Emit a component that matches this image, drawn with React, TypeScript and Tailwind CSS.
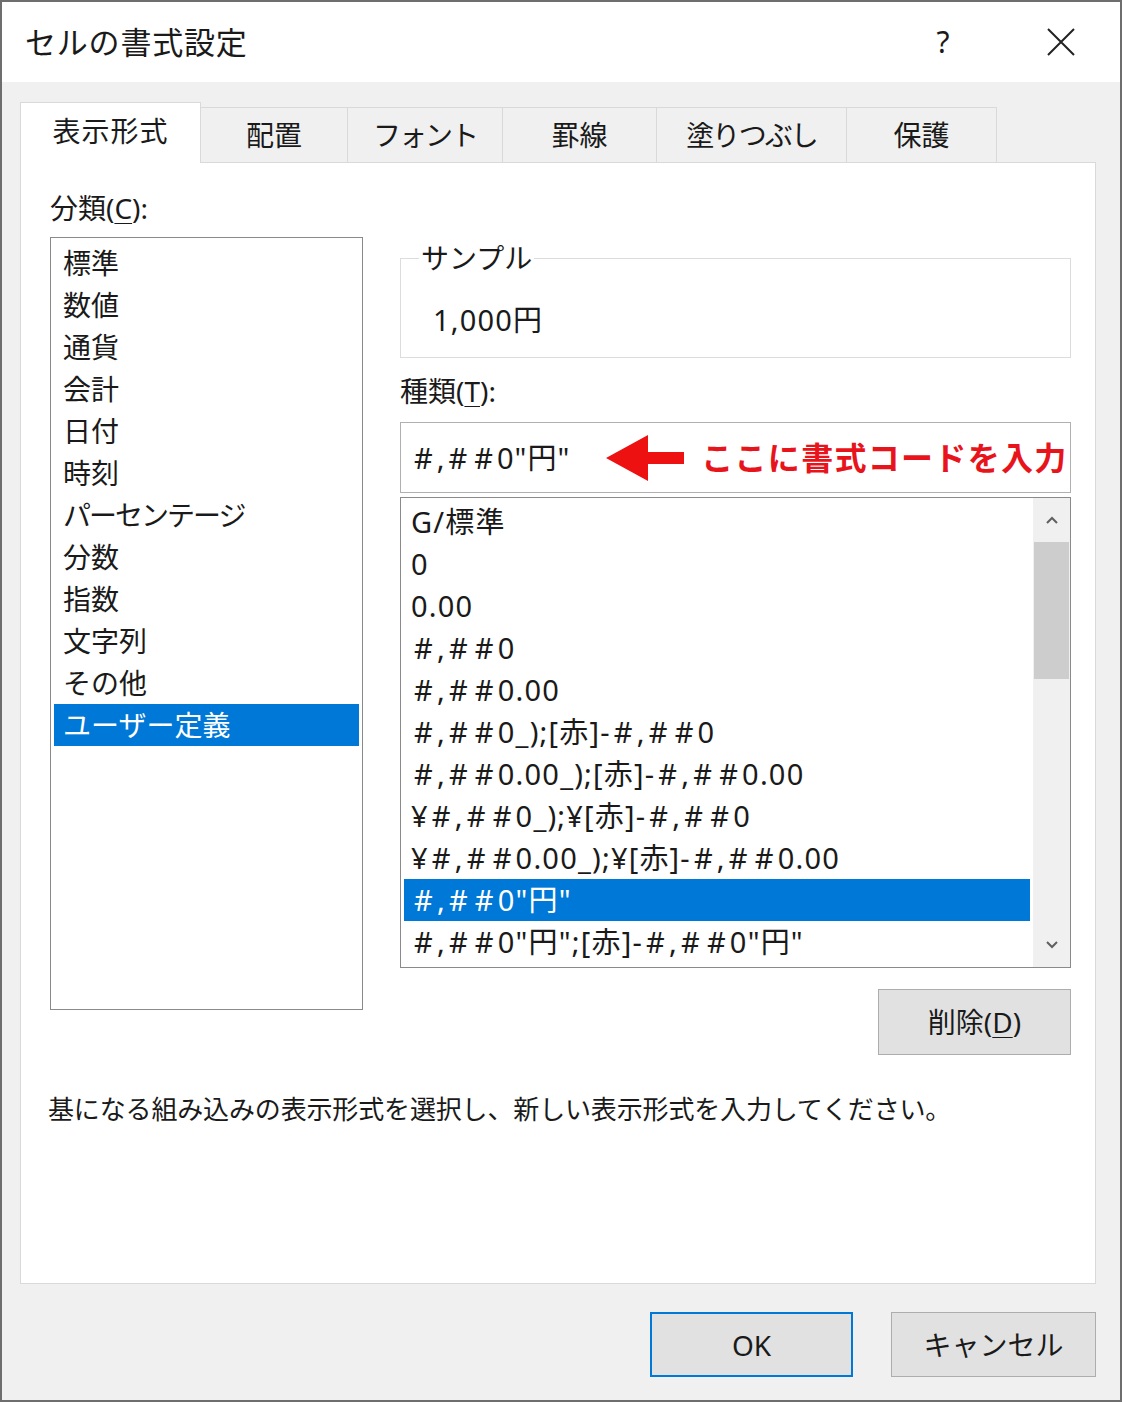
import { clsx } from 'clsx';

const FONT = "font-['Noto_Sans','Noto_Sans_CJK_JP',sans-serif]";

const TABS = [
    { label: '表示形式', w: 'w-[181px]', active: true },
    { label: '配置', w: 'w-[147px]' },
    { label: 'フォント', w: 'w-[155px]', kana: true },
    { label: '罫線', w: 'w-[154px]' },
    { label: '塗りつぶし', w: 'w-[190px]', kana: true },
    { label: '保護', w: 'w-[150px]' },
];

const CATEGORIES = ['標準', '数値', '通貨', '会計', '日付', '時刻', 'パーセンテージ', '分数', '指数', '文字列', 'その他', 'ユーザー定義'];

const FORMATS = [
    'G/標準',
    '0',
    '0.00',
    '#,##0',
    '#,##0.00',
    '#,##0_);[赤]-#,##0',
    '#,##0.00_);[赤]-#,##0.00',
    '¥#,##0_);¥[赤]-#,##0',
    '¥#,##0.00_);¥[赤]-#,##0.00',
    '#,##0"円"',
    '#,##0"円";[赤]-#,##0"円"',
];

// the UI font draws "#" wide, so pad each one
const Code = ({ text }: { text: string }) => (
    <>
        {text.split('#').map((part, i) => (
            <span key={i}>
                {i > 0 && <span className="px-[3px]">#</span>}
                {part}
            </span>
        ))}
    </>
);

const Chevron = ({ up }: { up?: boolean }) => (
    <svg width="14" height="10" viewBox="0 0 14 10" className="text-[#606060]">
        <path d={up ? 'M2 8 L7 3 L12 8' : 'M2 2 L7 7 L12 2'} fill="none" stroke="currentColor" strokeWidth="2" />
    </svg>
);

export default function App() {
    return (
        <div className={clsx(FONT, "w-[1122px] h-[1402px] border-2 border-[#6e6e6e] bg-[#f0f0f0] text-[#1a1a1a] flex flex-col overflow-hidden")}>
            {/* title bar */}
            <div className="h-[80px] bg-white flex items-center shrink-0">
                <div className="pl-[23px] text-[31px] leading-none tracking-[0.8px]">セルの書式設定</div>
                <div className="ml-auto w-[40px] text-center text-[30px] leading-none mr-[83px]">?</div>
                <svg width="30" height="30" viewBox="0 0 30 30" className="mr-[44px]">
                    <path d="M2 2 L28 28 M28 2 L2 28" stroke="#222" strokeWidth="2" />
                </svg>
            </div>

            {/* tabs */}
            <div className="flex items-end pl-[18px] pt-[20px] shrink-0">
                {TABS.map(t => (
                    <div
                        key={t.label}
                        className={clsx(
                            t.w,
                            "flex items-center justify-center text-[28px] leading-none border border-[#d9d9d9]",
                            t.kana && "tracking-[-2px]",
                            t.active
                                ? "h-[61px] bg-white border-b-0 relative z-10 -mb-px pb-[5px] tracking-[1px]"
                                : "h-[55px] bg-[#f0f0f0] border-l-0 border-b-0"
                        )}
                    >
                        {t.label}
                    </div>
                ))}
            </div>

            {/* panel */}
            <div className="ml-[18px] w-[1076px] h-[1122px] bg-white border border-[#d9d9d9] flex flex-col shrink-0">
                <div className="flex pl-[29px] pt-[27px]">
                    {/* category column */}
                    <div className="w-[313px] flex flex-col">
                        <div className="h-[36px] leading-[36px] text-[28px]">
                            分類(<span className="underline underline-offset-4 decoration-1">C</span>):
                        </div>
                        <div className="mt-[11px] h-[773px] border border-[#8a8a8a] px-[3px] pt-[4px]">
                            {CATEGORIES.map(c => (
                                <div
                                    key={c}
                                    className={clsx(
                                        "h-[42px] leading-[42px] pl-[9px] text-[28px]",
                                        c === 'パーセンテージ' && "tracking-[-2px]",
                                        c === 'ユーザー定義' && "bg-[#0078d7] text-white"
                                    )}
                                >
                                    {c}
                                </div>
                            ))}
                        </div>
                    </div>

                    {/* right column */}
                    <div className="ml-[37px] w-[671px] flex flex-col">
                        <fieldset className="mt-[50px] border border-[#dcdcdc] pl-[18px]">
                            <legend className="px-[2px] text-[28px] leading-[36px]">サンプル</legend>
                            <div className="pt-[26px] pb-[19px] pl-[14px] text-[29px] leading-[36px] tracking-[1.2px]">1,000円</div>
                        </fieldset>

                        <div className="mt-[15px] h-[36px] leading-[36px] text-[28px]">
                            種類(<span className="underline underline-offset-4 decoration-1">T</span>):
                        </div>

                        <div className="mt-[13px] h-[71px] border border-[#b0b0b0] flex items-center pl-[10px]">
                            <span className="text-[29px] leading-none tracking-[1px] whitespace-nowrap"><Code text={'#,##0"円"'} /></span>
                            <svg width="80" height="46" viewBox="0 0 80 46" className="ml-[36px] shrink-0">
                                <path d="M0 23 L42 0 L42 17 L78 17 L78 29 L42 29 L42 46 Z" fill="#ee1111" />
                            </svg>
                            <span className="ml-[15px] text-[32px] leading-none font-bold text-[#e8141c] tracking-[1.3px] whitespace-nowrap">
                                ここに書式コードを入力
                            </span>
                        </div>

                        <div className="mt-[4px] h-[471px] border border-[#8a8a8a] flex">
                            <div className="flex-1 px-[3px] pt-[3px]">
                                {FORMATS.map(f => (
                                    <div
                                        key={f}
                                        className={clsx(
                                            "h-[42px] leading-[42px] pl-[7px] text-[29px] whitespace-nowrap tracking-[1.2px]",
                                            f === '#,##0"円"' && "bg-[#0078d7] text-white"
                                        )}
                                    >
                                        <Code text={f} />
                                    </div>
                                ))}
                            </div>
                            <div className="w-[37px] bg-[#f0f0f0] flex flex-col">
                                <div className="h-[44px] flex items-center justify-center"><Chevron up /></div>
                                <div className="h-[137px] mx-[1px] bg-[#cdcdcd]" />
                                <div className="flex-1" />
                                <div className="h-[44px] flex items-center justify-center"><Chevron /></div>
                            </div>
                        </div>

                        <div className="mt-[21px] flex justify-end">
                            <button className="w-[193px] h-[66px] bg-[#e1e1e1] border border-[#adadad] text-[28px] leading-none">
                                削除(<span className="underline underline-offset-4 decoration-1">D</span>)
                            </button>
                        </div>
                    </div>
                </div>

                <div className="mt-[36px] pl-[27px] h-[36px] leading-[36px] text-[26px] tracking-[-0.15px] whitespace-nowrap">
                    基になる組み込みの表示形式を選択し、新しい表示形式を入力してください。
                </div>
            </div>

            {/* footer buttons */}
            <div className="flex justify-end gap-[38px] pr-[24px] mt-[28px]">
                <button className="w-[203px] h-[65px] bg-[#e1e1e1] border-2 border-[#0078d7] text-[28px] leading-none">OK</button>
                <button className="w-[205px] h-[65px] bg-[#e1e1e1] border border-[#adadad] text-[28px] leading-none">キャンセル</button>
            </div>
        </div>
    );
}
